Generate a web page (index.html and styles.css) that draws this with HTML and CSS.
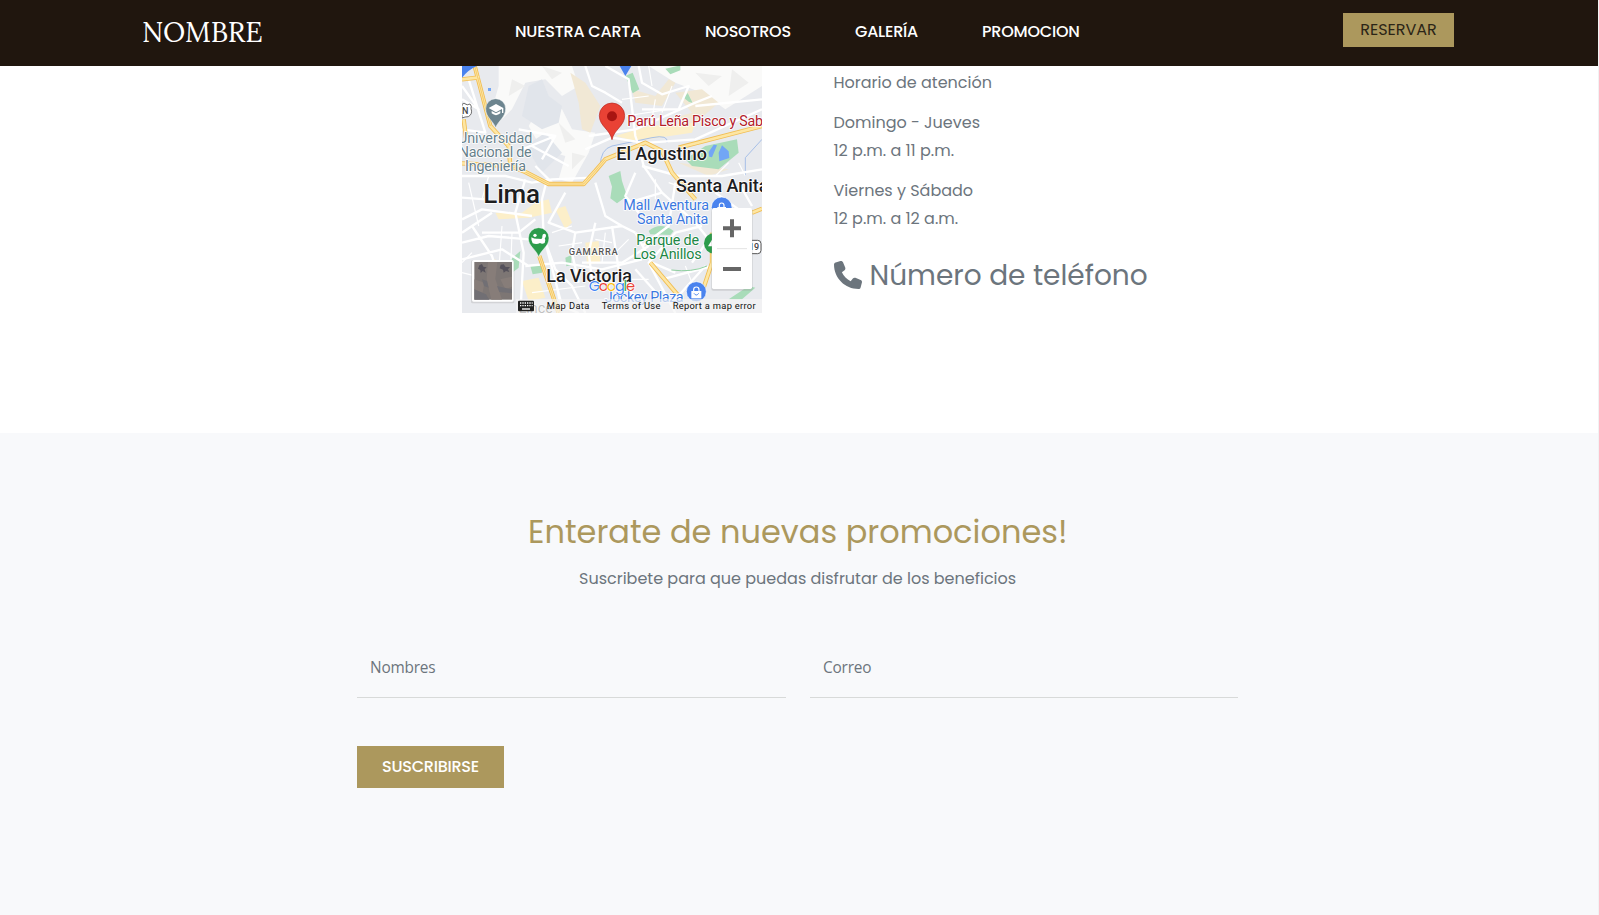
FILE: index.html
```html
<!DOCTYPE html>
<html lang="es">
<head>
<meta charset="utf-8">
<title>Nombre</title>
<link rel="stylesheet" href="styles.css">
</head>
<body>
<header class="navbar">
  <a class="brand">NOMBRE</a>
  <nav class="links">
    <a class="l1">NUESTRA CARTA</a>
    <a class="l2">NOSOTROS</a>
    <a class="l3">GALERÍA</a>
    <a class="l4">PROMOCION</a>
  </nav>
  <a class="reserve">RESERVAR</a>
</header>
<main>
  <section class="contact">
    <svg class="map" viewBox="0 0 900 741" preserveAspectRatio="none">
      <rect width="900" height="741" fill="#e8eaee"/>
      <g fill="#fafaf9">
        <path d="M110 0H330L350 60 300 90 250 40 190 50 150 130 110 170 90 130 110 60Z"/>
        <path d="M235 120L300 130 330 190 400 200 380 260 330 350 290 340 310 270 240 250 200 180Z"/>
        <path d="M560 0H900V60L790 130 720 80 640 50Z"/>
      </g>
      <g fill="#efefee">
        <path d="M240 0L300 20 270 40ZM150 40L190 60 140 90ZM290 170L340 220 310 230ZM700 20L780 30 740 60ZM810 10L860 50 800 90ZM330 260L370 270 330 310Z"/>
      </g>
      <g fill="#e1e5eb">
        <path d="M200 60L240 40 260 90 300 120 290 170 240 190 180 150Z"/>
        <path d="M190 240L250 200 300 260 240 320Z"/>
      </g>
      <g fill="#f1e8d5">
        <path d="M325 20L370 50 415 120 385 200 360 190 350 110Z"/>
        <path d="M640 80L720 70 770 110 690 180 620 160 690 140Z"/>
        <path d="M510 70L580 90 620 40 640 50 600 120 520 110Z"/>
        <path d="M650 290L800 310 740 330Z"/>
      </g>
      <g fill="#fcefc9">
        <path d="M460 210L560 180 700 170 690 200 520 225Z"/>
        <path d="M100 440L180 440 220 410 260 400 270 440 200 455 110 460Z"/>
        <path d="M280 430l30-10 20 50-20 20zM370 530l40-5 5 65-40 5zM180 645l50-10 20 60-50 10zM70 590l30-10 15 25-30 15z"/>
      </g>
      <g fill="#a9dcb9">
        <path d="M490 30l22-10 20 50-20 12zM610 8l45-10v15l-30 12zM665 95l12-14 15 30-12-4z"/>
        <path d="M440 330l35-15 5 30 15 45-30 22-20-15 5-35z"/>
        <path d="M670 280L730 240 825 220 830 260 770 310 690 300Z"/>
        <path d="M560 495q35-30 75 0l-10 12-60-2z"/>
        <path d="M205 600l40-10-5 30-28 5zM310 575l18-8v30l-15 4zM135 590l40-35-5 50-25 20zM800 700l60-40 20 5-40 35z"/>
      </g>
      <g fill="#72a6f5"><path d="M770 260l10-22 20 18 2 20-30 10zM740 258l15-22 10 2-15 36-8-2zM78 66h9v9h-9z"/></g>
      <g fill="none" stroke="#a6bfe7" stroke-width="3">
        <path d="M415 300Q415 250 450 240L570 215Q620 205 615 230M900 220L850 275V330"/>
      </g>
      <g fill="none" stroke="#fff" stroke-width="7" stroke-linejoin="round">
        <path d="M370 0L390 60 430 80 480 110M430 0L500 40 520 210 530 240 545 300 600 380 700 470M530 0L540 50 600 85 680 60 650 130 540 130"/>
        <path d="M380 210L520 190 610 150 700 110 750 90M560 230L700 220 900 130M370 250L450 215 540 230"/>
        <path d="M0 330L130 330 210 350 270 340 390 335M220 300L270 350M170 190L280 210 180 250M210 240L320 300M280 210L240 280"/>
        <path d="M0 60L50 130 0 100M20 40L70 200 0 190M0 395L70 400M0 460L60 430 210 450M0 500L90 440M60 500L170 500 220 460"/>
        <path d="M190 340L160 440 185 560 175 741M255 340L240 400 245 510 300 720 350 741M310 380L260 470 340 500 480 480 520 500M400 350L430 450 480 480"/>
        <path d="M0 530L80 510 200 520M0 580L120 550 200 600M30 480L90 570 130 700M190 600L300 590 420 610 540 580M240 500L280 610 330 660 370 741"/>
        <path d="M340 500L330 560 350 650M400 470L380 560 390 640M450 480L470 610 520 700M520 500L570 590 640 620M360 590L480 590 560 540M520 610L600 700"/>
        <path d="M520 320L490 390 530 440M540 300L650 330 780 330 900 310M600 380L500 410M700 470L740 520 690 590M640 350L620 480 540 540M720 480L640 500 560 590 640 741"/>
        <path d="M730 600L640 700M600 640L750 600M830 350L870 420M700 120L900 100M760 380L830 430"/>
      </g>
      <g fill="none" stroke="#fff" stroke-width="3.5">
        <path d="M20 350L50 480M80 330L60 400M120 480L110 620M150 500L145 640M0 620L80 640M30 560L0 590M270 500L330 480M290 540L360 530M400 520L450 530M430 500L420 590M500 520L460 560M210 680L370 660M280 640L290 700M480 640L560 640"/>
        <path d="M560 0L570 60M580 100L570 160M630 60L600 140M480 100L560 90M490 150L620 130M580 340L580 400M620 350L680 370M760 330L800 290M850 330L830 290M670 600L690 650"/>
      </g>
      <g fill="none" stroke-linejoin="round">
        <g stroke="#f1bd52" stroke-width="13">
          <path d="M38 0L85 180 140 240 145 300 0 292M0 40L52 34M145 300L190 318 260 354 365 354 400 315 430 280 550 230 600 255 630 320 700 400M650 245L900 180M232 570L290 741M565 590L650 690M750 500V590L720 680M870 440L900 428M5 160L12 215"/>
        </g>
        <g stroke="#fde6a3" stroke-width="8">
          <path d="M38 0L85 180 140 240 145 300 0 292M0 40L52 34M145 300L190 318 260 354 365 354 400 315 430 280 550 230 600 255 630 320 700 400M650 245L900 180M232 570L290 741M565 590L650 690M750 500V590L720 680M870 440L900 428M5 160L12 215"/>
        </g>
        <path stroke="#f1bd52" stroke-width="2" d="M145 300L190 318 260 354 365 354 400 315 430 280M38 0L85 180M232 570L290 741"/>
      </g>
      <path fill="#4a83ee" d="M0 0H45Q20 10 0 35ZM473 0H508L490 30Z"/>
      <path d="M0 115l6-3q10 8 18 2q6 6 3 14q6 16-8 24q-10 0-19 4z" fill="#fff" stroke="#555" stroke-width="2.5"/>
      <text x="0" y="143" class="ml shield">N</text>
      <path fill="#6d858f" stroke="#fff" stroke-width="1.5" d="M101 186C95 165 71 155 71 128a30 30 0 0 1 60 0C131 155 107 165 101 186Z"/>
      <path fill="#fff" d="M80 126l22-12 22 12v15h-4v-12l-18 10zM89 135l13 7 13-7v7q-13 11-26 0z"/>
      <g class="ml poi" fill="#67818b">
        <text x="-12" y="232" textLength="223">Universidad</text>
        <text x="-10" y="274" textLength="219">Nacional de</text>
        <text x="9" y="316" textLength="183">Ingeniería</text>
      </g>
      <path fill="#e94235" stroke="#b7271f" stroke-width="2" d="M450 221C444 190 412 180 412 149a38 38 0 0 1 76 0C488 180 456 190 450 221Z"/>
      <circle cx="450" cy="151" r="15" fill="#a81512"/>
      <text x="496" y="181" class="ml poi" fill="#b3202a" textLength="407">Parú Leña Pisco y Sab</text>
      <g class="ml town">
        <text x="463" y="281" textLength="272">El Agustino</text>
        <text x="642" y="377" textLength="277">Santa Anita</text>
        <text x="253" y="647" textLength="257">La Victoria</text>
      </g>
      <text x="64" y="411" class="ml city" textLength="170">Lima</text>
      <circle cx="779" cy="424" r="31" fill="#4a83ee" stroke="#fff" stroke-width="2"/>
      <path d="M766 436v-13h26v13z" fill="#fff"/><path d="M772 423v-5a7 7 0 0 1 14 0v5" fill="none" stroke="#fff" stroke-width="3.5"/>
      <g class="ml poi" fill="#3b78df">
        <text x="484" y="433" textLength="257">Mall Aventura</text>
        <text x="525" y="475" textLength="214">Santa Anita</text>
        <text x="428" y="708" textLength="237">Jockey Plaza</text>
      </g>
      <circle cx="757" cy="532" r="31" fill="#2c9c4b"/>
      <path d="M738 541l12-20 8 20z" fill="#fff"/>
      <g class="ml poi" fill="#208645">
        <text x="523" y="538" textLength="188">Parque de</text>
        <text x="514" y="580" textLength="205">Los Anillos</text>
      </g>
      <path fill="none" stroke="#8ecf9f" stroke-width="3" d="M628 612Q690 620 735 600"/>
      <text x="320" y="567" class="ml area" textLength="147">GAMARRA</text>
      <path fill="#2c9c4b" stroke="#fff" stroke-width="1.5" d="M230 574C224 550 199 543 199 516a31 31 0 0 1 62 0C261 543 236 550 230 574Z"/>
      <path d="M208 514q12 6 20 4l10 1q4-3 3-9 0-7 7-7 6 2 3 10-5 4-1 9l-2 9q-8 5-14 0-10 6-22 1-5-8-4-18z" fill="#fff"/>
      <circle cx="219" cy="508" r="5" fill="#fff"/>
      <rect x="845" y="523" width="52" height="40" rx="10" fill="#fff" stroke="#555" stroke-width="3"/>
      <text x="861" y="552" class="ml route">19</text>
      <circle cx="703" cy="677" r="30" fill="#4a83ee" stroke="#fff" stroke-width="2"/>
      <path d="M688 675h30v22h-30z" fill="#fff"/><path d="M695 676v-5a8 8 0 0 1 16 0v5" fill="none" stroke="#fff" stroke-width="3.5"/><path d="M696 682q7 10 14 0" fill="none" stroke="#4a83ee" stroke-width="3"/>
      <text x="380" y="676" class="google" textLength="139"><tspan fill="#4285f4">G</tspan><tspan fill="#ea4335">o</tspan><tspan fill="#fbbc05">o</tspan><tspan fill="#4285f4">g</tspan><tspan fill="#34a853">l</tspan><tspan fill="#ea4335">e</tspan></text>
      <text x="170" y="740" class="ml poi" fill="#555">Lince</text>
      <path d="M162 699H900V741H162Z" fill="#f5f5f5" opacity=".68"/>
      <rect x="168" y="704" width="48" height="32" rx="3" fill="#222"/>
      <path d="M174 711h38M174 719h38" stroke="#fff" stroke-width="4" stroke-dasharray="4 3"/><path d="M180 729h24" stroke="#fff" stroke-width="4"/>
      <g class="credit">
        <text x="254" y="729" textLength="128">Map Data</text>
        <text x="419" y="729" textLength="176">Terms of Use</text>
        <text x="632" y="729" textLength="249">Report a map error</text>
      </g>
      <rect x="27" y="582" width="130" height="130" rx="5" fill="#aaa" opacity=".35"/>
      <rect x="30" y="582" width="125" height="125" rx="5" fill="#fff"/>
      <rect x="37" y="588" width="113" height="113" fill="#7d7674"/>
      <g fill="#877d79"><path d="M78 588h28l-6 50 20 63H88L74 640zM37 640l30 10-5 30-25-8zM115 640l35-8v30l-20 8z"/></g>
      <g fill="#716f74"><path d="M37 670l35 15 10 16H37zM105 660l45 10v12l-38-4zM60 640l15 5 5 20-14-5z"/></g>
      <g fill="#55515a"><path d="M52 598l8-4 4 8 10 2-6 6 3 10-9-5-6 6-1-9-7-4zM116 596l9-1 6 8 13 0-6 7 4 8-10-3-7 5-2-9-10-4z"/></g>
      <rect x="748" y="428" width="124" height="246" rx="6" fill="#999" opacity=".3"/>
      <rect x="750" y="426" width="120" height="243" rx="5" fill="#fff"/>
      <path d="M765 548H855" stroke="#e3e3e3" stroke-width="3"/>
      <path d="M783 487H837M810 460V514M783 609H837" stroke="#666" stroke-width="12"/>
    </svg>
    <div class="info">
      <p>Horario de atención</p>
      <p>Domingo - Jueves<br>12 p.m. a 11 p.m.</p>
      <p>Viernes y Sábado<br>12 p.m. a 12 a.m.</p>
      <h3 class="phone">
        <svg viewBox="0 0 512 512" width="28" height="28"><path fill="currentColor" d="M164.900 24.600c-7.700-18.600-28-28.500-47.400-23.200l-88 24C12.100 30.200 0 46 0 64c0 247.400 200.600 448 448 448 18 0 33.800-12.100 38.600-29.500l24-88c5.300-19.400-4.600-39.700-23.200-47.400l-96-40c-16.300-6.800-35.200-2.100-46.300 11.600L304.700 368C234.300 334.700 177.300 277.700 144 207.300L193.300 167c13.700-11.200 18.400-30 11.600-46.300l-40-96z"/></svg>
        <span>Número de teléfono</span>
      </h3>
    </div>
  </section>
  <section class="news">
    <h2>Enterate de nuevas promociones!</h2>
    <p class="sub">Suscribete para que puedas disfrutar de los beneficios</p>
    <form class="form">
      <div class="field">Nombres</div>
      <div class="field">Correo</div>
      <div><button class="send" type="button">SUSCRIBIRSE</button></div>
    </form>
  </section>
</main>
</body>
</html>
```
FILE: styles.css
```css
* { box-sizing: border-box; }
html { background: #f1f2f3; }
body { margin: 0; font: 16px/28px Poppins, Inter, sans-serif; color: #6c757d; background: #fff; width: 1598px; overflow-x: hidden; }
h2, h3, p { margin: 0; font-weight: 400; white-space: nowrap; }
.navbar { height: 66px; background: #20160e; color: #fff; display: grid; grid-template-columns: 373px 828px 111px; padding: 13px 0 0 142px; align-items: start; }
.brand { font: 28px/38px Lora, "Liberation Serif", serif; letter-spacing: -.1px; }
.links { display: flex; gap: 64px; line-height: 38px; font-weight: 500; letter-spacing: -.22px; }
.links a { flex: none; white-space: nowrap; }
.l1 { width: 126px; }
.l2 { width: 86px; }
.l3 { width: 63px; }
.l4 { width: 98px; }
.reserve { height: 34px; background: #ac985d; color: #2b2517; text-align: center; line-height: 33px; }
.contact { height: 367px; display: flex; padding-left: 462px; gap: 71.5px; }
.map { width: 300px; height: 247px; flex: none; }
.ml { font-family: Roboto, sans-serif; paint-order: stroke; stroke: #fff; stroke-width: 5px; stroke-linejoin: round; }
.poi { font-size: 43px; }
.town { font-size: 54px; font-weight: 500; fill: #1d1d1f; }
.city { font-size: 78px; font-weight: 500; fill: #1d1d1f; }
.area { font-size: 28px; font-weight: 500; fill: #555; }
.shield, .route { font-size: 27px; font-weight: 500; fill: #444; }
.google { font: 400 44px Poppins, sans-serif; paint-order: stroke; stroke: #fff; stroke-width: 4px; }
.credit { font: 28px Roboto, sans-serif; fill: #111; }
.info { padding-top: 3px; }
.info p { margin-bottom: 12px; }
.phone { display: flex; align-items: center; gap: 8px; font-size: 28px; line-height: 36px; margin-top: 25px; }
.phone svg { margin-bottom: 3px; }
.news { height: 482px; background: #f8f9fb; padding-top: 79px; }
.news h2 { font-size: 32px; line-height: 40px; color: #ac985d; padding-left: 528px; }
.sub { padding-left: 579px; margin-top: 13px; }
.form { display: grid; grid-template-columns: 429px 428px; column-gap: 24px; padding-left: 357px; margin-top: 46px; row-gap: 48px; }
.field { height: 59px; border-bottom: 1px solid #d8dad9; padding: 15px 13px; font: 15.4px/28px "Open Sans", sans-serif; letter-spacing: -.2px; }
.send { width: 147px; height: 42px; border: 0; background: #ac985d; color: #fff; font: 500 16px/40px Poppins, Inter, sans-serif; letter-spacing: -.25px; padding: 0; }
```
